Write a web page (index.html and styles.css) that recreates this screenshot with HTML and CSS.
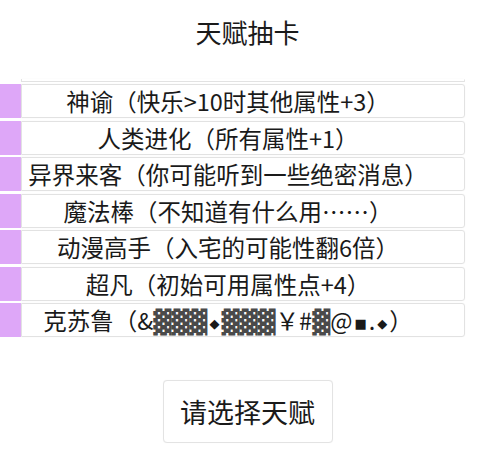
FILE: index.html
```html
<!DOCTYPE html>
<html lang="zh-CN">
<head>
<meta charset="utf-8">
<title>天赋抽卡</title>
<link rel="stylesheet" href="styles.css">
</head>
<body>
<main class="page">
  <h1 class="title">天赋抽卡</h1>
  <div class="list">
    <div class="item item-tail"><span class="mark"></span><div class="box"></div></div>
    <div class="item"><span class="mark"></span><div class="box">神谕（快乐&gt;10时其他属性+3）</div></div>
    <div class="item"><span class="mark"></span><div class="box">人类进化（所有属性+1）</div></div>
    <div class="item"><span class="mark"></span><div class="box">异界来客（你可能听到一些绝密消息）</div></div>
    <div class="item"><span class="mark"></span><div class="box">魔法棒（不知道有什么用……）</div></div>
    <div class="item"><span class="mark"></span><div class="box">动漫高手（入宅的可能性翻6倍）</div></div>
    <div class="item"><span class="mark"></span><div class="box">超凡（初始可用属性点+4）</div></div>
    <div class="item"><span class="mark"></span><div class="box">克苏鲁（&amp;<span class="glitch">▓▓▓</span><span class="sym">◆</span><span class="glitch">▓▓▓</span>￥#<span class="glitch">▓</span>@<span class="sym">■</span>.<span class="sym">◆</span>）</div></div>
  </div>
  <div class="actions">
    <button class="btn" type="button">请选择天赋</button>
  </div>
</main>
</body>
</html>
```
FILE: styles.css
```css
html, body {
  margin: 0;
  padding: 0;
  background: #fff;
}
body {
  font-family: "Noto Sans CJK SC", "Noto Sans", sans-serif;
  color: #1a1a1a;
}
.page {
  width: 480px;
  height: 473px;
  overflow: hidden;
}
.title {
  margin: 0;
  padding: 12px 0 0 15px;
  height: 40px;
  line-height: 40px;
  font-size: 26px;
  font-weight: 400;
  text-align: center;
}
.list {
  margin-top: 26px;
  display: flex;
  flex-direction: column;
  gap: 2.5px;
  padding-right: 15px;
}
.item {
  display: flex;
  height: 34px;
}
.item-tail {
  height: 3.5px;
  overflow: hidden;
  align-items: flex-end;
}
.item-tail .mark {
  background: #ecc8fb;
}
.item-tail .box {
  height: 3px;
  border-top: none;
}
.mark {
  width: 21px;
  flex: none;
  background: #dea7f8;
}
.box {
  flex: 1;
  box-sizing: border-box;
  border: 1px solid #e2e2e2;
  box-shadow: 0 0 1px #ececec;
  border-radius: 0 3px 3px 0;
  font-size: 23.5px;
  line-height: 32px;
  text-align: center;
  padding-right: 30px;
  white-space: nowrap;
}
.glitch {
  font-family: "DejaVu Sans", sans-serif;
  color: #4a4a4a;
}
.sym {
  font-family: "DejaVu Sans", sans-serif;
  font-size: 13px;
  vertical-align: 2px;
  margin: 0 2px;
}
.actions {
  padding-left: 15px;
  margin-top: 43px;
  display: flex;
  justify-content: center;
}
.btn {
  width: 170px;
  height: 63px;
  background: #fff;
  border: 1px solid #e3e3e3;
  border-radius: 4px;
  box-shadow: 0 0 1px #eee;
  font-family: "Noto Sans CJK SC", "Noto Sans", sans-serif;
  font-size: 27px;
  color: #1a1a1a;
  padding: 0;
}
```
